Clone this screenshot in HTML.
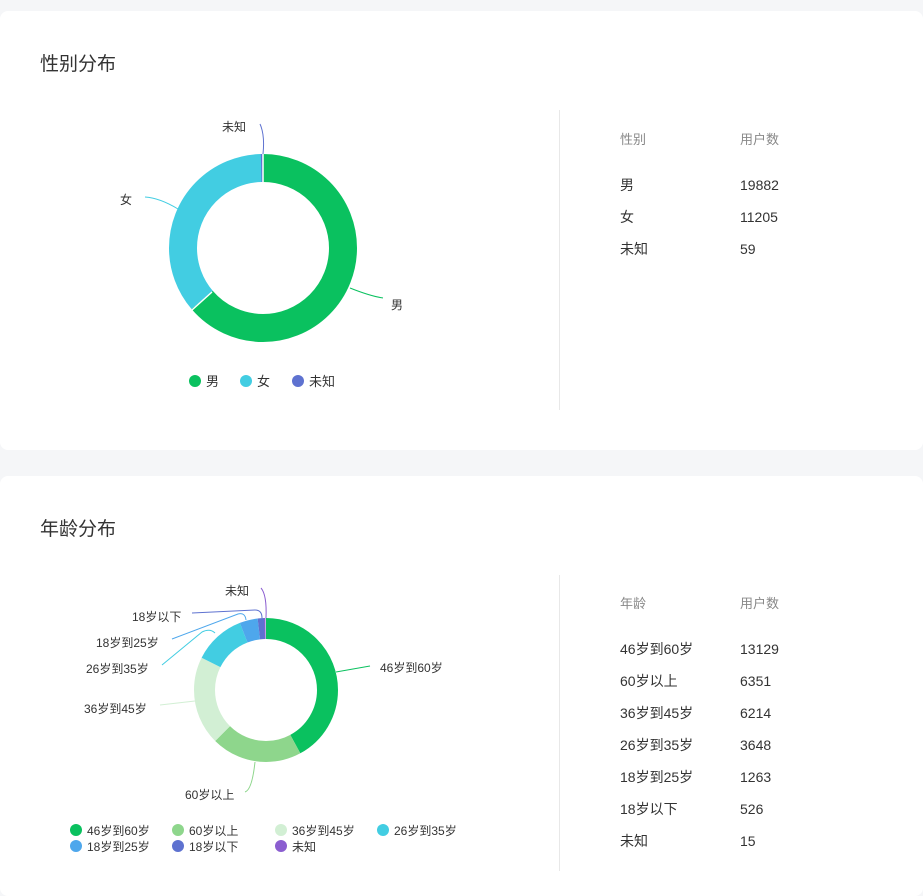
<!DOCTYPE html>
<html><head><meta charset="utf-8"><style>
*{margin:0;padding:0;box-sizing:border-box}
body{width:923px;height:871px;background:#f5f6f8;font-family:"Liberation Sans","Noto Sans CJK SC",sans-serif;color:#333;position:relative;overflow:hidden}
.card{position:absolute;left:0;width:923px;background:#fff;border-radius:8px}
.t{position:absolute;font-size:19px;color:#333;left:40px}
.tx{position:absolute;font-size:14px;white-space:nowrap;line-height:16px}
.h{color:#888;font-size:13px}
.div{position:absolute;left:559px;width:1px;background:#e8e8e8}
svg{position:absolute;left:0;top:0}
svg text{font-family:"Liberation Sans","Noto Sans CJK SC",sans-serif;font-size:12px;fill:#333}
</style></head><body>
<div class="card" style="top:11px;height:439px"></div>
<div class="card" style="top:476px;height:420px"></div>
<div class="t" style="top:49px">性别分布</div>
<div class="t" style="top:514px">年龄分布</div>
<div class="div" style="top:110px;height:300px"></div>
<div class="div" style="top:575px;height:296px"></div>

<div class="tx h" style="left:620px;top:132px">性别</div>
<div class="tx h" style="left:740px;top:132px">用户数</div>
<div class="tx" style="left:620px;top:177px">男</div><div class="tx" style="left:740px;top:177px">19882</div>
<div class="tx" style="left:620px;top:209px">女</div><div class="tx" style="left:740px;top:209px">11205</div>
<div class="tx" style="left:620px;top:241px">未知</div><div class="tx" style="left:740px;top:241px">59</div>

<div class="tx h" style="left:620px;top:596px">年龄</div>
<div class="tx h" style="left:740px;top:596px">用户数</div>
<div class="tx" style="left:620px;top:641px">46岁到60岁</div><div class="tx" style="left:740px;top:641px">13129</div>
<div class="tx" style="left:620px;top:673px">60岁以上</div><div class="tx" style="left:740px;top:673px">6351</div>
<div class="tx" style="left:620px;top:705px">36岁到45岁</div><div class="tx" style="left:740px;top:705px">6214</div>
<div class="tx" style="left:620px;top:737px">26岁到35岁</div><div class="tx" style="left:740px;top:737px">3648</div>
<div class="tx" style="left:620px;top:769px">18岁到25岁</div><div class="tx" style="left:740px;top:769px">1263</div>
<div class="tx" style="left:620px;top:801px">18岁以下</div><div class="tx" style="left:740px;top:801px">526</div>
<div class="tx" style="left:620px;top:833px">未知</div><div class="tx" style="left:740px;top:833px">15</div>

<svg width="923" height="871">
<g transform="rotate(-90 263 248)" fill="none" stroke-width="28">
<circle cx="263" cy="248" r="80" pathLength="100" stroke="#0ac15f" stroke-dasharray="63.83 100" stroke-dashoffset="0"/>
<circle cx="263" cy="248" r="80" pathLength="100" stroke="#42cde2" stroke-dasharray="35.98 100" stroke-dashoffset="-63.83"/>
<circle cx="263" cy="248" r="80" pathLength="100" stroke="#5e72d0" stroke-dasharray="0.3 100" stroke-dashoffset="-99.75"/>
</g>
<line x1="263" y1="154" x2="263" y2="182" stroke="#fff" stroke-width="1.5"/>
<line x1="212" y1="292" x2="192" y2="310" stroke="#fff" stroke-width="1.5"/>
<path d="M350 288 Q370 296 383 298" stroke="#0ac15f" fill="none"/>
<path d="M178 209 Q160 198 145 197" stroke="#42cde2" fill="none"/>
<path d="M263 154 Q265 135 260 124" stroke="#5e72d0" fill="none"/>
<text x="391" y="309">男</text>
<text x="120" y="204">女</text>
<text x="222" y="131">未知</text>
<circle cx="195" cy="381" r="6" fill="#0ac15f"/><text x="206" y="386" style="font-size:13px">男</text>
<circle cx="246" cy="381" r="6" fill="#42cde2"/><text x="257" y="386" style="font-size:13px">女</text>
<circle cx="298" cy="381" r="6" fill="#5e72d0"/><text x="309" y="386" style="font-size:13px">未知</text>

<g transform="rotate(-90 266 690)" fill="none" stroke-width="21">
<circle cx="266" cy="690" r="61.5" pathLength="100" stroke="#0ac15f" stroke-dasharray="42.15 100" stroke-dashoffset="0"/>
<circle cx="266" cy="690" r="61.5" pathLength="100" stroke="#8ed68c" stroke-dasharray="20.39 100" stroke-dashoffset="-42.15"/>
<circle cx="266" cy="690" r="61.5" pathLength="100" stroke="#d2efd4" stroke-dasharray="19.95 100" stroke-dashoffset="-62.54"/>
<circle cx="266" cy="690" r="61.5" pathLength="100" stroke="#42cde2" stroke-dasharray="11.71 100" stroke-dashoffset="-82.49"/>
<circle cx="266" cy="690" r="61.5" pathLength="100" stroke="#4ea7ec" stroke-dasharray="4.06 100" stroke-dashoffset="-94.2"/>
<circle cx="266" cy="690" r="61.5" pathLength="100" stroke="#5e72d0" stroke-dasharray="1.69 100" stroke-dashoffset="-98.26"/>
<circle cx="266" cy="690" r="61.5" pathLength="100" stroke="#8b5ed0" stroke-dasharray="0.3 100" stroke-dashoffset="-99.7"/>
</g>
<path d="M336 672 L370 666" stroke="#0ac15f" fill="none"/>
<path d="M255 762 Q252 790 245 792" stroke="#8ed68c" fill="none"/>
<path d="M195 701 L160 705" stroke="#d2efd4" fill="none"/>
<path d="M215 633 Q210 628 202 632 L162 665" stroke="#42cde2" fill="none"/>
<path d="M246 620 Q245 612 238 614 L172 639" stroke="#4ea7ec" fill="none"/>
<path d="M262 618 Q262 610 255 610 L192 613" stroke="#5e72d0" fill="none"/>
<path d="M266 618 Q267 595 261 588" stroke="#8b5ed0" fill="none"/>
<text x="380" y="672">46岁到60岁</text>
<text x="185" y="799">60岁以上</text>
<text x="84" y="713">36岁到45岁</text>
<text x="86" y="673">26岁到35岁</text>
<text x="96" y="647">18岁到25岁</text>
<text x="132" y="621">18岁以下</text>
<text x="225" y="595">未知</text>
<g style="font-size:12px">
<circle cx="76" cy="830" r="6" fill="#0ac15f"/><text x="87" y="835">46岁到60岁</text>
<circle cx="178" cy="830" r="6" fill="#8ed68c"/><text x="189" y="835">60岁以上</text>
<circle cx="281" cy="830" r="6" fill="#d2efd4"/><text x="292" y="835">36岁到45岁</text>
<circle cx="383" cy="830" r="6" fill="#42cde2"/><text x="394" y="835">26岁到35岁</text>
<circle cx="76" cy="846" r="6" fill="#4ea7ec"/><text x="87" y="851">18岁到25岁</text>
<circle cx="178" cy="846" r="6" fill="#5e72d0"/><text x="189" y="851">18岁以下</text>
<circle cx="281" cy="846" r="6" fill="#8b5ed0"/><text x="292" y="851">未知</text>
</g>
</svg>
</body></html>
